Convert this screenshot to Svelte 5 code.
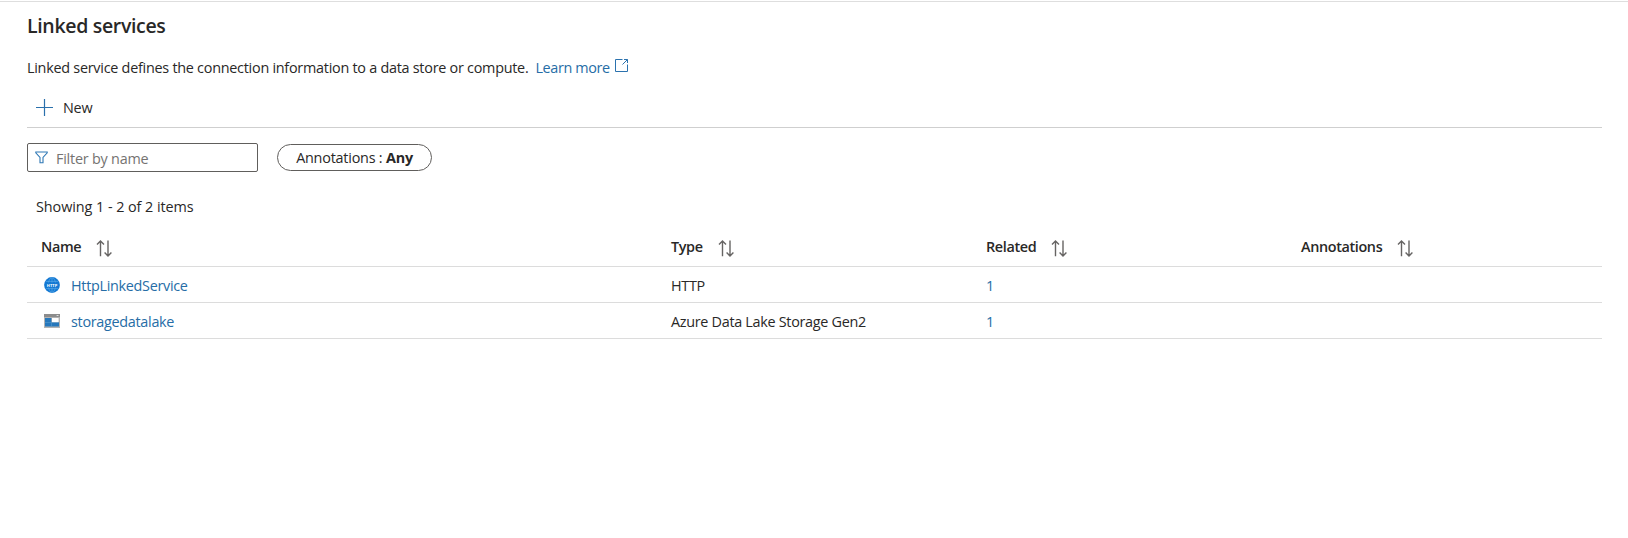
<script>
  const columns = ['Name', 'Type', 'Related', 'Annotations'];
  const services = [
    { name: 'HttpLinkedService', type: 'HTTP', related: 1, icon: 'http' },
    { name: 'storagedatalake', type: 'Azure Data Lake Storage Gen2', related: 1, icon: 'storage' }
  ];
</script>

<main>
  <h1>Linked services</h1>
  <p class="intro">
    <span>Linked service defines the connection information to a data store or compute.</span>
    <a href="#learn">Learn more
      <svg width="15" height="15" viewBox="0 0 15 15" fill="none" stroke="#2b72ae">
        <path d="M8.5 1.5H1.5V13.5H13.5V6.5M10 1.5H13.5V5M13.5 1.5L8.5 6.5" />
      </svg>
    </a>
  </p>

  <div class="toolbar">
    <button class="new">
      <svg width="17" height="17" viewBox="0 0 17 17" fill="none" stroke="#2a70ac" stroke-width="1.2">
        <path d="M8.5 0V17M0 8.5H17" />
      </svg>
      <span>New</span>
    </button>
  </div>

  <div class="filters">
    <label class="search">
      <svg width="13" height="13" viewBox="0 0 13 13" fill="none" stroke="#2f78b5" stroke-width="1.1">
        <path d="M0.8 1H12.2V1.8L8 6.4V11.8H5V6.4L0.8 1.8Z" />
      </svg>
      <input placeholder="Filter by name" />
    </label>
    <button class="pill">Annotations : <b>Any</b></button>
  </div>

  <div class="count">Showing 1 - 2 of 2 items</div>

  <div class="table">
    <div class="row head">
      {#each columns as column}
        <div class="cell">
          <span>{column}</span>
          <svg class="sort" width="16" height="17" viewBox="0 0 16 17" fill="none" stroke="#666463" stroke-width="1.4">
            <path d="M4.5 16.2V1.2M1 4.4L4.5 1L8 4.4M12 0.6V15.8M8.6 12.6L12 16L15.4 12.6" />
          </svg>
        </div>
      {/each}
    </div>
    {#each services as service}
      <div class="row">
        <div class="cell name">
          {#if service.icon === 'http'}
            <svg width="16" height="16" viewBox="0 0 16 16">
              <circle cx="8" cy="8" r="7.9" fill="#1479d3" />
              <g fill="none" stroke="#5dabea" stroke-width="0.6">
                <ellipse cx="8" cy="8" rx="3.7" ry="7.3" />
                <path d="M1.8 4.4H14.2M1.8 11.6H14.2M8 0.6V15.4" />
              </g>
              <rect x="1.8" y="5.5" width="12.4" height="5" fill="#1479d3" />
              <text x="8" y="9.6" text-anchor="middle" textLength="10.4" lengthAdjust="spacingAndGlyphs">HTTP</text>
            </svg>
          {:else}
            <svg width="16" height="16" viewBox="0 0 16 16">
              <path fill="#b3b3b3" d="M0 1H16V15H0Z" />
              <path fill="#8c8c8c" d="M0 1H16V4H0Z" />
              <path fill="#ddd" d="M12.6 2H14.5V3H12.6Z" />
              <path fill="#2678bc" d="M1 5H7.4V13.6H1ZM7.4 9.2H15V13.6H7.4Z" />
              <path fill="#fff" d="M8 5H14.6V9.2H8Z" />
              <path fill="#5ea0d2" d="M1 9H7.4V9.5H1ZM7.4 9.2H7.9V13.6H7.4Z" />
            </svg>
          {/if}
          <a href="#{service.name}">{service.name}</a>
        </div>
        <div class="cell">{service.type}</div>
        <div class="cell"><a href="#related">{service.related}</a></div>
        <div class="cell"></div>
      </div>
    {/each}
  </div>
</main>

<style>
  :global(body) {
    background: #fff;
  }
  main {
    box-sizing: border-box;
    height: 538px;
    padding: 0 26px 0 27px;
    font: 14.4px/20px "Open Sans", "Noto Sans", sans-serif;
    letter-spacing: -0.22px;
    color: #292827;
    background: linear-gradient(#dedede, #dedede) 0 1px / 100% 1px no-repeat;
  }
  h1 {
    margin: 0;
    padding-top: 13px;
    font-size: 19.5px;
    font-weight: 600;
    line-height: 26px;
    letter-spacing: -0.33px;
  }
  a {
    color: #266da6;
    text-decoration: none;
  }
  svg {
    display: block;
    flex: none;
  }
  button {
    font: inherit;
    letter-spacing: inherit;
    color: inherit;
    background: none;
    border: 0;
    padding: 0;
  }
  .intro {
    display: flex;
    gap: 7px;
    margin: 0;
    padding-top: 19px;
    letter-spacing: -0.26px;
  }
  .intro a {
    display: flex;
    gap: 4px;
    letter-spacing: -0.38px;
  }
  .toolbar {
    display: flex;
    height: 38px;
    margin-top: 11px;
    padding-left: 9px;
    border-bottom: 1px solid #cfcfcf;
  }
  .new {
    display: flex;
    align-items: center;
    gap: 10px;
  }
  .new svg {
    margin-bottom: 1px;
  }
  .filters {
    display: flex;
    align-items: center;
    gap: 19px;
    padding-top: 15px;
  }
  .search {
    box-sizing: border-box;
    display: flex;
    align-items: center;
    gap: 8px;
    width: 231px;
    height: 29px;
    padding-left: 7px;
    border: 1px solid #605e5c;
    border-radius: 2px;
  }
  .search svg {
    margin-bottom: 1px;
  }
  input {
    width: 180px;
    height: 20px;
    padding: 2px 0 0;
    border: 0;
    outline: 0;
    font: inherit;
    letter-spacing: inherit;
    background: none;
  }
  input::placeholder {
    color: #757371;
    opacity: 1;
  }
  .pill {
    box-sizing: border-box;
    width: 155px;
    height: 27px;
    border: 1px solid #605e5c;
    border-radius: 14px;
    line-height: 24px;
    white-space: nowrap;
  }
  .count {
    padding: 25px 0 0 9px;
    letter-spacing: -0.06px;
  }
  .table {
    padding-top: 10px;
    letter-spacing: -0.3px;
  }
  .row {
    display: grid;
    grid-template-columns: 2fr 1fr 1fr 1fr;
    height: 35px;
    border-bottom: 1px solid #dcdcdc;
  }
  .head {
    height: 39px;
    font-weight: 600;
    letter-spacing: -0.36px;
  }
  .cell {
    display: flex;
    align-items: center;
    padding: 3px 0 0 14px;
  }
  .head .cell {
    gap: 15px;
    padding-top: 0;
  }
  .sort {
    margin-top: 3px;
  }
  .name {
    gap: 11px;
    padding-left: 17px;
  }
  .name svg {
    margin-bottom: 2px;
  }
  text {
    font: 700 4.2px "Open Sans", sans-serif;
    letter-spacing: 0;
    fill: #fff;
  }
</style>
